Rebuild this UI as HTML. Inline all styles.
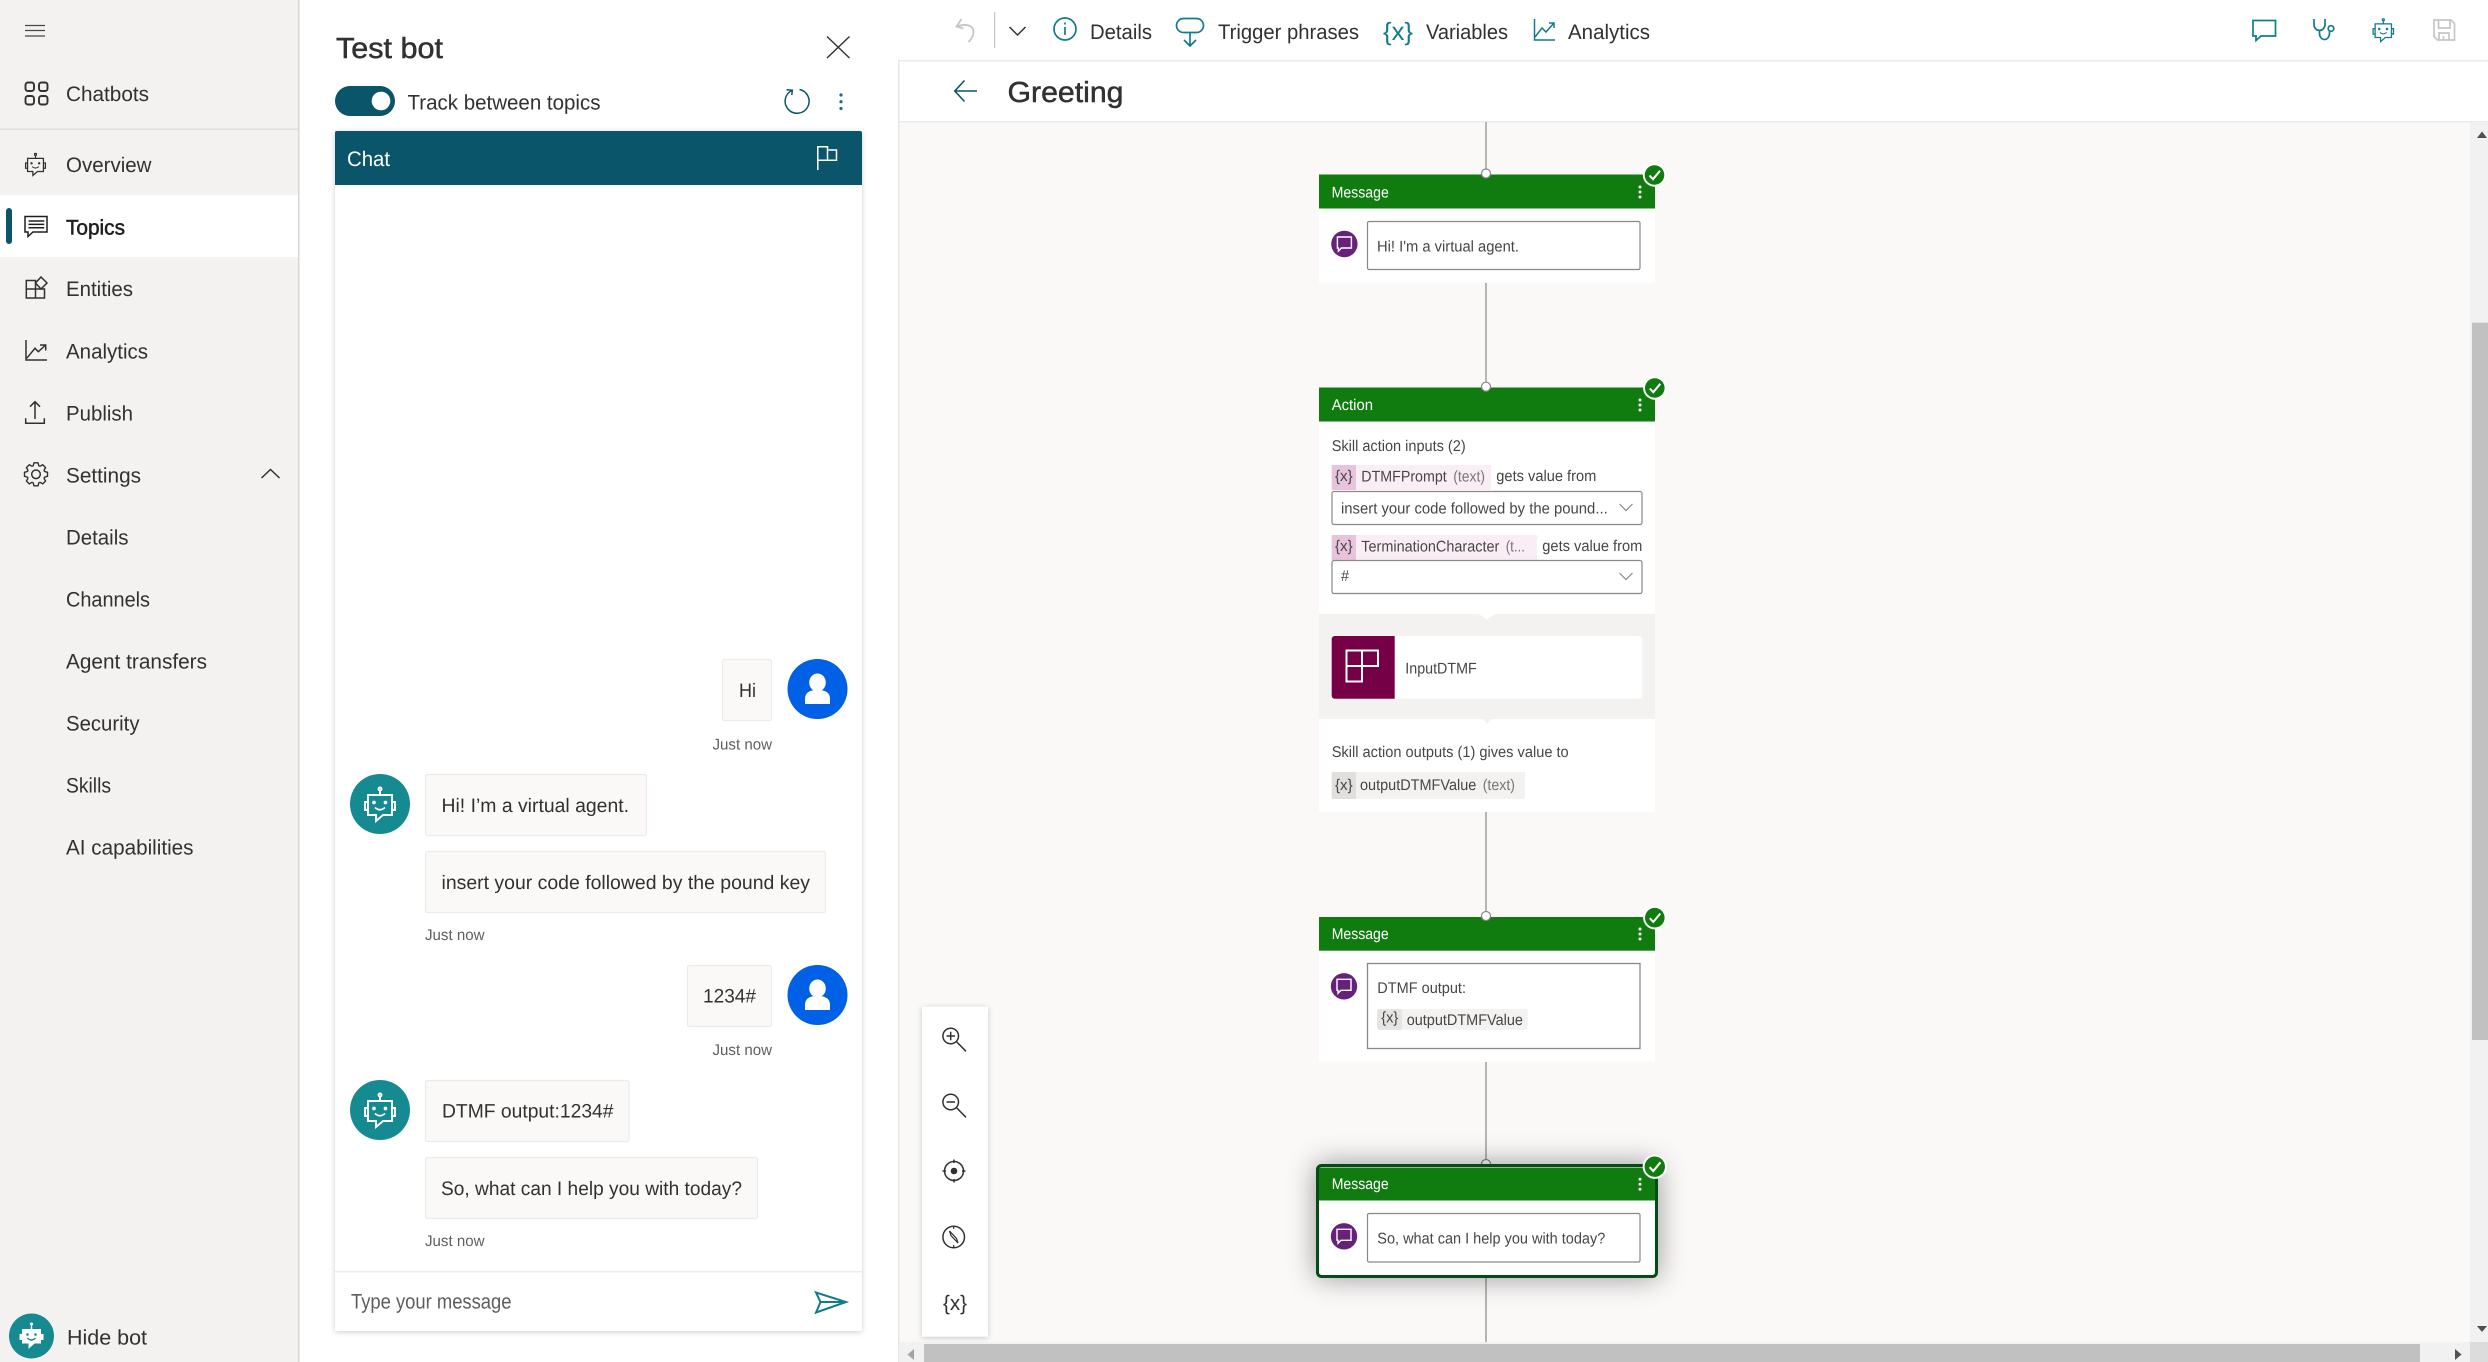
<!DOCTYPE html>
<html lang="en"><head><meta charset="utf-8"><title>Test bot - Greeting</title>
<style>
html,body{margin:0;padding:0;background:#fff;width:2488px;height:1362px;overflow:hidden}
svg{display:block}
text{font-family:"Liberation Sans",Arial,sans-serif;fill:#323130;font-size:21px;text-rendering:geometricPrecision}
.nav{font-size:21px;transform:translateY(-.5px)}
.msg{font-size:19.5px;fill:#323130}
.time{font-size:15.5px;fill:#605e5c}
.tb{font-size:21px;fill:#323130}
.c{font-size:15.5px;fill:#484644;transform:translateY(-.8px)}
.l{fill:#797775}
.h{font-size:15.5px;fill:#fff;transform:translateY(-.8px)}
.sb{stroke-width:.5;paint-order:stroke}
.ic{fill:none;stroke:#323130;stroke-width:1.5}
.te{fill:none;stroke:#117c8a;stroke-width:1.7}
.bd{fill:#faf9f8;stroke:#edebe9;stroke-width:1.2}
.dd{fill:#fff;stroke:#8a8886;stroke-width:1.2}
</style></head><body>
<svg width="2488" height="1362" viewBox="0 0 2488 1362" xmlns="http://www.w3.org/2000/svg">
<defs>
<g id="badge"><circle r="11.7" fill="#fff"/><circle r="9.8" fill="#107c10"/><path d="M-5 .5L-1.5 4.2L5.5-4.2" fill="none" stroke="#fff" stroke-width="2"/></g>
<g id="dots" fill="#fff"><circle cx="0" cy="-5" r="1.5"/><circle cx="0" cy="0" r="1.5"/><circle cx="0" cy="5" r="1.5"/></g>
<g id="chatav"><circle r="13.2" fill="#68217a"/><path d="M-7-7H7V4H-3L-6 7V4H-7Z" fill="none" stroke="#fff" stroke-width="1.4"/></g>
<circle id="node" r="4.5" fill="#fff" stroke="#8a8886" stroke-width="1.2"/>
<g id="bot" fill="none" stroke-width="1.9"><circle cx="0" cy="-15" r="1.5"/><path d="M0-14V-9M-12-9H12V11H3L-4 17V11H-12ZM-12-2H-15V6H-12M12-2H15V6H12"/><path d="M-5 3.500Q0 8 5 3.500" stroke-width="1.6"/><circle cx="-6" cy="-1.5" r=".9"/><circle cx="5.5" cy="-1.5" r=".9"/></g>
<g id="user"><circle r="30" fill="#0060e6"/><ellipse cx="0" cy="-6.5" rx="8.3" ry="9" fill="#fff"/><path d="M-12.5 15V10C-12.500 3-7 1 0 1S12.500 3 12.500 10V15Z" fill="#fff"/></g>
<path id="tooth" d="M-3.300-7.950L-2.700-9L-2-11.500H2L2.700-9L3.300-7.950" fill="none" stroke="#323130" stroke-width="1.4"/>
</defs>

<!-- canvas -->
<rect x="899" y="122" width="1571" height="1222" fill="#faf9f8"/>
<rect x="899" y="121" width="1589" height="1.500" fill="#edebe9"/>
<rect x="899" y="60" width="1589" height="1.500" fill="#edebe9"/>
<rect x="898" y="60" width="1.500" height="1302" fill="#e8e6e4"/>

<!-- sidebar -->
<rect width="298" height="1362" fill="#f3f2f1"/>
<rect x="298" width="1.500" height="1362" fill="#d8d6d4"/>
<path d="M25 25.500H45M25 30.500H45M25 36H45" fill="none" stroke="#484644" stroke-width="1.200"/>
<g fill="none" stroke="#323130" stroke-width="1.900"><rect x="25.500" y="82.500" width="8.500" height="8.500" rx="2.500"/><rect x="39" y="82.500" width="8.500" height="8.500" rx="2.500"/><rect x="25.500" y="96" width="8.500" height="8.500" rx="2.500"/><rect x="39" y="96" width="8.500" height="8.500" rx="2.500"/></g>
<text class="nav" x="66" y="101.500" textLength="83" lengthAdjust="spacingAndGlyphs">Chatbots</text>
<rect y="128.500" width="298" height="1.500" fill="#e1dfdd"/>
<use href="#bot" transform="translate(35.500 164.300) scale(.66)" stroke="#323130"/>
<text class="nav" x="66" y="172.700" textLength="85.500" lengthAdjust="spacingAndGlyphs">Overview</text>
<rect y="195" width="298" height="62" fill="#fff"/>
<rect x="6" y="208" width="6" height="36" rx="3" fill="#0b556a"/>
<path class="ic" d="M25 216.500H47V232H33L28 236.500V232H25ZM28.500 221H44.300M28.500 224.400H44.300M28.500 227.800H44.300" style="stroke:#201f1e"/>
<text class="nav sb" x="66" y="235" textLength="59" lengthAdjust="spacingAndGlyphs" stroke="#201f1e" style="fill:#201f1e">Topics</text>
<path class="ic" d="M26.300 280.500H35.500V298H26.300ZM26.300 289H44.500V298H35.500M41 277L47 283L41 289L35.500 283Z"/>
<text class="nav" x="66" y="296.700" textLength="67" lengthAdjust="spacingAndGlyphs">Entities</text>
<path class="ic" d="M26 340V360H47M26.700 358.300L35 348.300L38.300 351.700L45.700 345M40 345H45.700V350.500"/>
<text class="nav" x="66" y="359" textLength="82" lengthAdjust="spacingAndGlyphs">Analytics</text>
<path class="ic" d="M35 402.500V419M30 406.700L35 401.700L40 406.700M25.700 418.300V423.300H44.300V418.300"/>
<text class="nav" x="66" y="421" textLength="67" lengthAdjust="spacingAndGlyphs">Publish</text>
<g transform="translate(36 474.300)"><circle r="4.300" class="ic"/><use href="#tooth"/><use href="#tooth" transform="rotate(45)"/><use href="#tooth" transform="rotate(90)"/><use href="#tooth" transform="rotate(135)"/><use href="#tooth" transform="rotate(180)"/><use href="#tooth" transform="rotate(225)"/><use href="#tooth" transform="rotate(270)"/><use href="#tooth" transform="rotate(315)"/></g>
<text class="nav" x="66" y="483" textLength="75" lengthAdjust="spacingAndGlyphs">Settings</text>
<path class="ic" d="M261.500 478L270.500 469.500L279.500 478"/>
<text class="nav" x="66" y="545" textLength="62.500" lengthAdjust="spacingAndGlyphs">Details</text>
<text class="nav" x="66" y="607" textLength="84" lengthAdjust="spacingAndGlyphs">Channels</text>
<text class="nav" x="66" y="669" textLength="141" lengthAdjust="spacingAndGlyphs">Agent transfers</text>
<text class="nav" x="66" y="731" textLength="73.500" lengthAdjust="spacingAndGlyphs">Security</text>
<text class="nav" x="66" y="793" textLength="45" lengthAdjust="spacingAndGlyphs">Skills</text>
<text class="nav" x="66" y="855" textLength="127.500" lengthAdjust="spacingAndGlyphs">AI capabilities</text>
<circle cx="31.500" cy="1336" r="22.500" fill="#158a90"/>
<g transform="translate(31.500 1336)"><circle cx="0" cy="-12" r="1.500" fill="#fff"/><path d="M-.7-12H.7V-7H-.7ZM-9.500-7H9.500V7.500H3L-3 13V7.500H-9.500ZM-12-2H-9V4H-12ZM9-2H12V4H9Z" fill="#fff"/><circle cx="-4" cy="-1.500" r="1.300" fill="#158a90"/><circle cx="4" cy="-1.500" r="1.300" fill="#158a90"/><path d="M-4 2Q0 6 4 2" fill="none" stroke="#158a90" stroke-width="1.300"/></g>
<text class="nav" x="67" y="1345" textLength="80" lengthAdjust="spacingAndGlyphs">Hide bot</text>

<!-- test bot panel -->
<text class="sb" x="336" y="58" textLength="107" lengthAdjust="spacingAndGlyphs" stroke="#323130" style="font-size:29px">Test bot</text>
<path class="ic" d="M827 36.500L849.500 58M849.500 36.500L827 58" style="stroke-width:1.400"/>
<rect x="335" y="86" width="60" height="30" rx="15" fill="#0b556a"/><circle cx="381" cy="101" r="9.300" fill="#fff"/>
<text class="nav" x="407.500" y="110" textLength="193" lengthAdjust="spacingAndGlyphs">Track between topics</text>
<path d="M791.800 90.500A12 12 0 1 0 799.500 89.500M786.500 89.800L792.300 90.200L791.800 95" fill="none" stroke="#0b556a" stroke-width="1.500"/>
<g fill="#1d6a85"><circle cx="841" cy="95" r="1.600"/><circle cx="841" cy="101.700" r="1.600"/><circle cx="841" cy="108.500" r="1.600"/></g>
<rect x="335" y="131" width="527" height="1200" rx="2" fill="#fff" style="filter:drop-shadow(0 1.500px 3px rgba(0,0,0,.2))"/>
<path d="M335 133a2 2 0 0 1 2-2H860a2 2 0 0 1 2 2V185H335Z" fill="#0b556a"/>
<text class="nav" x="347" y="166.700" textLength="43" lengthAdjust="spacingAndGlyphs" style="fill:#fff">Chat</text>
<path d="M817.800 170V146.800H827.500V160.300H817.800M827.500 150H836.500V160.300H827.500" fill="none" stroke="#fff" stroke-width="1.500"/>

<rect class="bd" x="722.500" y="659.500" width="49" height="61" rx="2"/>
<text class="msg" x="739" y="697" textLength="17" lengthAdjust="spacingAndGlyphs">Hi</text>
<use href="#user" x="817.500" y="689"/>
<text class="time" x="712.500" y="749.300" textLength="59.500" lengthAdjust="spacingAndGlyphs">Just now</text>

<circle cx="380" cy="804" r="30" fill="#158a90"/><use href="#bot" x="380" y="804" stroke="#fff"/>
<rect class="bd" x="425.500" y="774.500" width="221" height="61" rx="2"/>
<text class="msg" x="441.500" y="812" textLength="187.500" lengthAdjust="spacingAndGlyphs">Hi! I’m a virtual agent.</text>
<rect class="bd" x="425.500" y="851.500" width="400" height="61" rx="2"/>
<text class="msg" x="441.500" y="889" textLength="368.500" lengthAdjust="spacingAndGlyphs">insert your code followed by the pound key</text>
<text class="time" x="425" y="940" textLength="59.500" lengthAdjust="spacingAndGlyphs">Just now</text>

<rect class="bd" x="687.500" y="965.500" width="84" height="61" rx="2"/>
<text class="msg" x="703" y="1002.700" textLength="53" lengthAdjust="spacingAndGlyphs">1234#</text>
<use href="#user" x="817.500" y="995"/>
<text class="time" x="712.500" y="1055" textLength="59.500" lengthAdjust="spacingAndGlyphs">Just now</text>

<circle cx="380" cy="1110" r="30" fill="#158a90"/><use href="#bot" x="380" y="1110" stroke="#fff"/>
<rect class="bd" x="425.500" y="1080.500" width="203.500" height="61" rx="2"/>
<text class="msg" x="442" y="1117.700" textLength="171.500" lengthAdjust="spacingAndGlyphs">DTMF output:1234#</text>
<rect class="bd" x="425.500" y="1157.500" width="332" height="61" rx="2"/>
<text class="msg" x="441" y="1195" textLength="301" lengthAdjust="spacingAndGlyphs">So, what can I help you with today?</text>
<text class="time" x="425" y="1246" textLength="59.500" lengthAdjust="spacingAndGlyphs">Just now</text>

<rect x="335" y="1271" width="527" height="1.500" fill="#edebe9"/>
<text class="nav" x="351" y="1309" textLength="160.500" lengthAdjust="spacingAndGlyphs" style="fill:#605e5c">Type your message</text>
<path class="te" d="M816 1292.500L846 1302L816 1312.500L820.500 1302ZM820.500 1302H846" style="stroke-width:2"/>

<!-- toolbar -->
<path d="M961.500 19L956.500 26.500L963.500 28.500M957 26.500C972 21 979 31 968.500 42" fill="none" stroke="#c8c6c4" stroke-width="1.800"/>
<rect x="994" y="12" width="1.200" height="36" fill="#c8c6c4"/>
<path class="ic" d="M1009.500 27L1017.500 35L1025.500 27"/>
<circle class="te" cx="1065" cy="29" r="11"/><path class="te" d="M1065 27V35M1065 22.500V24.500"/>
<text class="tb" x="1090" y="39" textLength="62" lengthAdjust="spacingAndGlyphs">Details</text>
<rect class="te" x="1176.500" y="18.500" width="27" height="14" rx="7"/><path class="te" d="M1190 32.500V46M1184 40L1190 46L1196 40"/>
<text class="tb" x="1218" y="39" textLength="141" lengthAdjust="spacingAndGlyphs">Trigger phrases</text>
<text x="1383" y="40" textLength="30" lengthAdjust="spacingAndGlyphs" style="font-size:25px;fill:#117c8a">{x}</text>
<text class="tb" x="1426" y="39" textLength="82" lengthAdjust="spacingAndGlyphs">Variables</text>
<path class="te" d="M1534.500 19V40H1555M1535 37L1542 28L1546 32L1554 23M1549 23H1554V28" style="stroke-width:1.500"/>
<text class="tb" x="1568" y="39" textLength="82" lengthAdjust="spacingAndGlyphs">Analytics</text>
<path class="te" d="M2253 20.500H2275.500V36H2261L2256 40.500V36H2253Z"/>
<path class="te" d="M2314 19V24.500A5.500 6 0 0 0 2325 24.500V19M2319.500 30.500V33.500A5 6 0 0 0 2329.500 33.500V31.500"/><circle class="te" cx="2331" cy="28.500" r="2.800"/>
<use href="#bot" transform="translate(2383.300 30) scale(.68)" stroke="#117c8a"/>
<path d="M2434 20H2451L2454.500 23.500V40H2437.500L2434 36.500ZM2438.500 20V28H2450V20M2439 40V33H2449V40M2443.500 36V40" fill="none" stroke="#c8c6c4" stroke-width="1.700"/>
<path d="M977 91H955.500M964.500 80.500L954.800 91L964.500 101.500" fill="none" stroke="#0b556a" stroke-width="1.600"/>
<text class="sb" x="1007.500" y="102" textLength="116" lengthAdjust="spacingAndGlyphs" stroke="#323130" style="font-size:29px">Greeting</text>

<!-- connectors -->
<g stroke="#8a8886" stroke-width="1.200"><path d="M1486 122V174M1486 283V387M1486 812V916M1486 1062V1166M1486 1278V1342"/></g>

<!-- card 1 -->
<rect x="1319" y="174.500" width="336" height="108" fill="#fff"/>
<rect x="1319" y="174.500" width="336" height="34" fill="#107c10"/>
<use href="#node" x="1486" y="173.500"/><use href="#badge" x="1654.500" y="175"/><use href="#dots" x="1640" y="192"/>
<text class="h" x="1331.600" y="198.300" textLength="57.200" lengthAdjust="spacingAndGlyphs">Message</text>
<use href="#chatav" x="1344.400" y="244"/>
<rect class="dd" x="1367.500" y="221.500" width="272.500" height="48" rx="1.500"/>
<text class="c" x="1377" y="252.300" textLength="142" lengthAdjust="spacingAndGlyphs">Hi! I'm a virtual agent.</text>

<!-- card 2 action -->
<rect x="1319" y="387.500" width="336" height="424.500" fill="#fff"/>
<rect x="1319" y="387.500" width="336" height="34" fill="#107c10"/>
<use href="#node" x="1486" y="386.700"/><use href="#badge" x="1654.800" y="388"/><use href="#dots" x="1640" y="405"/>
<text class="h" x="1331.700" y="411" textLength="41.300" lengthAdjust="spacingAndGlyphs">Action</text>
<text class="c" x="1331.700" y="451.700" textLength="134" lengthAdjust="spacingAndGlyphs">Skill action inputs (2)</text>

<rect x="1331.700" y="465" width="159.300" height="25" fill="#f9eef5"/><rect x="1331.700" y="465" width="24.300" height="25" fill="#e8c3dc"/>
<text class="c" x="1335" y="482" textLength="17.700" lengthAdjust="spacingAndGlyphs">{x}</text>
<text class="c" x="1361.300" y="482.300" textLength="85.400" lengthAdjust="spacingAndGlyphs">DTMFPrompt</text>
<text class="c l" x="1453.300" y="482.300" textLength="31.700" lengthAdjust="spacingAndGlyphs">(text)</text>
<text class="c" x="1496.300" y="482" textLength="100" lengthAdjust="spacingAndGlyphs">gets value from</text>
<rect class="dd" x="1332" y="491.500" width="310" height="33" rx="2"/>
<text class="c" x="1341" y="514.300" textLength="266.700" lengthAdjust="spacingAndGlyphs">insert your code followed by the pound...</text>
<path d="M1619.500 504L1626 510.500L1632.500 504" fill="none" stroke="#8a8886" stroke-width="1.200"/>

<rect x="1331.700" y="535" width="205.300" height="25" fill="#f9eef5"/><rect x="1331.700" y="535" width="24.300" height="25" fill="#e8c3dc"/>
<text class="c" x="1335" y="552" textLength="17.700" lengthAdjust="spacingAndGlyphs">{x}</text>
<text class="c" x="1361.300" y="552.300" textLength="138" lengthAdjust="spacingAndGlyphs">TerminationCharacter</text>
<text class="c l" x="1505.700" y="552.300" textLength="19.300" lengthAdjust="spacingAndGlyphs">(t...</text>
<text class="c" x="1542.300" y="552" textLength="100" lengthAdjust="spacingAndGlyphs">gets value from</text>
<rect class="dd" x="1332" y="560.500" width="310" height="33" rx="2"/>
<text class="c" x="1341" y="582" textLength="8" lengthAdjust="spacingAndGlyphs">#</text>
<path d="M1619.500 573L1626 579.500L1632.500 573" fill="none" stroke="#8a8886" stroke-width="1.200"/>

<rect x="1319" y="614" width="336" height="105" fill="#f3f2f1"/>
<path d="M1479 614H1495L1487 619.500Z" fill="#fff"/><path d="M1482.500 719H1491.500L1487 724Z" fill="#f3f2f1"/>
<rect x="1331.700" y="636" width="310.600" height="62.700" rx="3" fill="#fff"/>
<path d="M1331.700 639a3 3 0 0 1 3-3H1394.700V698.700H1334.700a3 3 0 0 1-3-3Z" fill="#750046"/>
<path d="M1346.500 650.500H1378V666H1362V681.500H1346.500ZM1346.500 666H1362M1362 650.500V666" fill="none" stroke="#fff" stroke-width="2"/>
<text class="c" x="1405.300" y="674.300" textLength="71.400" lengthAdjust="spacingAndGlyphs">InputDTMF</text>
<text class="c" x="1331.700" y="757.700" textLength="237" lengthAdjust="spacingAndGlyphs">Skill action outputs (1) gives value to</text>
<rect x="1331.700" y="772" width="193.300" height="27" rx="1" fill="#f3f2f1"/><rect x="1331.700" y="772" width="24.300" height="27" rx="1" fill="#e1dfdd"/>
<text class="c" x="1335" y="790.700" textLength="17.700" lengthAdjust="spacingAndGlyphs">{x}</text>
<text class="c" x="1360" y="790.700" textLength="116.300" lengthAdjust="spacingAndGlyphs">outputDTMFValue</text>
<text class="c l" x="1482.700" y="790.700" textLength="32.300" lengthAdjust="spacingAndGlyphs">(text)</text>

<!-- card 3 -->
<rect x="1319" y="917" width="336" height="144.300" fill="#fff"/>
<rect x="1319" y="917" width="336" height="33.700" fill="#107c10"/>
<use href="#node" x="1486" y="916"/><use href="#badge" x="1654.800" y="917.700"/><use href="#dots" x="1640" y="934"/>
<text class="h" x="1331.700" y="940" textLength="57" lengthAdjust="spacingAndGlyphs">Message</text>
<use href="#chatav" x="1344" y="986.300"/>
<rect x="1367.500" y="963.500" width="272.500" height="85" fill="#fff" stroke="#8a8886" stroke-width="1.300"/>
<text class="c" x="1377.300" y="994" textLength="88.700" lengthAdjust="spacingAndGlyphs">DTMF output:</text>
<rect x="1377.300" y="1009" width="150.400" height="20.700" rx="1" fill="#f3f2f1"/><rect x="1377.300" y="1009" width="24.700" height="20.700" rx="1" fill="#e6e4e2"/>
<text class="c" x="1381.300" y="1023.300" textLength="17" lengthAdjust="spacingAndGlyphs">{x}</text>
<text class="c" x="1406.700" y="1026" textLength="116.300" lengthAdjust="spacingAndGlyphs">outputDTMFValue</text>

<!-- card 4 selected -->
<use href="#node" x="1486" y="1164"/>
<rect x="1317.500" y="1165.500" width="339" height="111" rx="4" fill="#fff" stroke="#054b16" stroke-width="3" style="filter:drop-shadow(0 0 14px rgba(0,0,0,.4))"/>
<rect x="1319" y="1167.500" width="336" height="33" fill="#107c10"/>
<use href="#badge" transform="translate(1654.800 1166.700) scale(1.040)"/><use href="#dots" x="1640" y="1184.300"/>
<text class="h" x="1331.700" y="1190" textLength="57" lengthAdjust="spacingAndGlyphs">Message</text>
<use href="#chatav" x="1344" y="1236.300"/>
<rect class="dd" x="1367.500" y="1213.500" width="272.500" height="48.500" rx="1.500"/>
<text class="c" x="1377.300" y="1244.300" textLength="228" lengthAdjust="spacingAndGlyphs">So, what can I help you with today?</text>

<!-- zoom controls -->
<rect x="922" y="1006.700" width="66" height="330" fill="#fff" style="filter:drop-shadow(0 1.500px 3px rgba(0,0,0,.2))"/>
<g class="ic">
<circle cx="950.700" cy="1036" r="7.800"/><path d="M956.300 1041.500L966 1051.300M946.500 1036H955M950.700 1031.700V1040.300"/>
<circle cx="950.700" cy="1102" r="7.800"/><path d="M956.300 1107.500L966 1117.300M946.500 1102H955"/>
<circle cx="954" cy="1171" r="9.500"/><path d="M954 1159.500V1163M954 1179V1182.500M942.500 1171H946M962 1171H965.500"/>
<circle cx="953.700" cy="1237" r="10.800"/><path d="M953.700 1226.500V1229M953.700 1245V1247.500M949.500 1231L956.500 1238.500L958 1243L951 1235.500Z" style="stroke-width:1.200"/>
</g>
<circle cx="954" cy="1171" r="3.300" fill="#323130"/>
<text x="943" y="1310" textLength="24" lengthAdjust="spacingAndGlyphs" style="font-size:21px">{x}</text>

<!-- scrollbars -->
<rect x="2470" y="122" width="18" height="1240" fill="#f1f1f1"/>
<rect x="2472" y="322.700" width="16" height="717.300" fill="#c1c1c1"/>
<path d="M2482 131.500L2487 138H2477Z" fill="#505050"/><path d="M2477 1326H2487L2482 1332Z" fill="#505050"/>
<rect x="899" y="1342" width="1571" height="20" fill="#f1f1f1"/>
<rect x="924" y="1344" width="1496" height="18" fill="#c1c1c1"/>
<path d="M914 1349V1360L907.500 1354.500Z" fill="#a3a3a3"/><path d="M2455 1349V1360L2461.500 1354.500Z" fill="#505050"/>
<rect x="2470" y="1342" width="18" height="20" fill="#dcdcdc"/>
</svg>
</body></html>
